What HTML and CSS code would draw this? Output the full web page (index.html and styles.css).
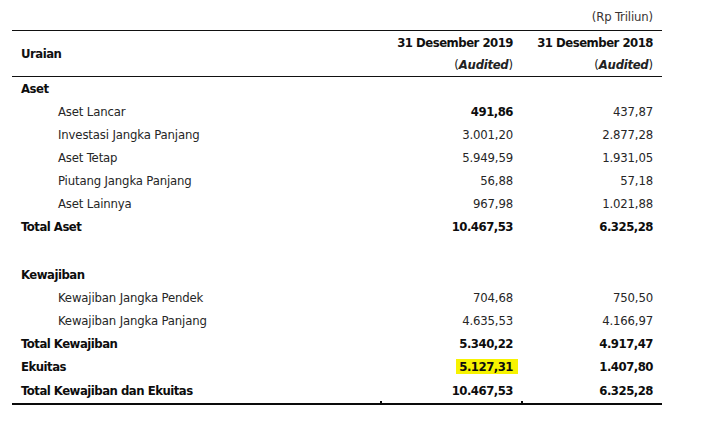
FILE: index.html
```html
<!DOCTYPE html>
<html lang="id">
<head>
<meta charset="utf-8">
<title>Neraca</title>
<link rel="stylesheet" href="styles.css">
</head>
<body>
<div class="sheet">
  <div class="unit">(Rp Triliun)</div>
  <table class="fin">
    <colgroup>
      <col class="c-lbl">
      <col class="c-y1">
      <col class="c-y2">
    </colgroup>
    <thead>
      <tr class="h1">
        <th class="lbl" rowspan="2">Uraian</th>
        <th class="num">31 Desember 2019</th>
        <th class="num">31 Desember 2018</th>
      </tr>
      <tr class="h2">
        <th class="num aud">(<i>Audited</i>)</th>
        <th class="num aud">(<i>Audited</i>)</th>
      </tr>
    </thead>
    <tbody>
      <tr class="b"><td class="lbl">Aset</td><td class="num"></td><td class="num"></td></tr>
      <tr><td class="lbl ind">Aset Lancar</td><td class="num strong">491,86</td><td class="num">437,87</td></tr>
      <tr><td class="lbl ind">Investasi Jangka Panjang</td><td class="num">3.001,20</td><td class="num">2.877,28</td></tr>
      <tr><td class="lbl ind">Aset Tetap</td><td class="num">5.949,59</td><td class="num">1.931,05</td></tr>
      <tr><td class="lbl ind">Piutang Jangka Panjang</td><td class="num">56,88</td><td class="num">57,18</td></tr>
      <tr><td class="lbl ind">Aset Lainnya</td><td class="num">967,98</td><td class="num">1.021,88</td></tr>
      <tr class="b"><td class="lbl">Total Aset</td><td class="num">10.467,53</td><td class="num">6.325,28</td></tr>
      <tr class="gap"><td class="lbl"></td><td class="num"></td><td class="num"></td></tr>
      <tr class="b"><td class="lbl">Kewajiban</td><td class="num"></td><td class="num"></td></tr>
      <tr><td class="lbl ind">Kewajiban Jangka Pendek</td><td class="num">704,68</td><td class="num">750,50</td></tr>
      <tr><td class="lbl ind">Kewajiban Jangka Panjang</td><td class="num">4.635,53</td><td class="num">4.166,97</td></tr>
      <tr class="b"><td class="lbl">Total Kewajiban</td><td class="num">5.340,22</td><td class="num">4.917,47</td></tr>
      <tr class="b tall"><td class="lbl">Ekuitas</td><td class="num"><span class="hl">5.127,31</span></td><td class="num">1.407,80</td></tr>
      <tr class="b tall last"><td class="lbl">Total Kewajiban dan Ekuitas</td><td class="num tick">10.467,53</td><td class="num tick">6.325,28</td></tr>
    </tbody>
  </table>
</div>
</body>
</html>
```
FILE: styles.css
```css
html, body {
  margin: 0;
  padding: 0;
  background: #ffffff;
}
body {
  font-family: "DejaVu Sans Condensed", "DejaVu Sans", sans-serif;
  font-stretch: condensed;
  font-size: 13px;
  letter-spacing: -0.15px;
  color: #262626;
}
.sheet {
  width: 650px;
  margin-left: 12px;
  padding-top: 8px;
}
.unit {
  text-align: right;
  padding-right: 9px;
  height: 22px;
  line-height: 18px;
  color: #3a3433;
}
.fin {
  width: 650px;
  border-collapse: collapse;
  table-layout: fixed;
}
.c-lbl { width: 369px; }
.c-y1 { width: 141px; }
.c-y2 { width: 140px; }
.fin th, .fin td {
  box-sizing: border-box;
  padding: 0;
  height: 23px;
  vertical-align: middle;
  white-space: nowrap;
}
.fin thead tr.h1 th { border-top: 1px solid #111; height: 23px; }
.fin thead tr.h2 th { height: 23px; }
.fin thead tr.h2 th, .fin thead th.lbl { border-bottom: 1px solid #111; }
.fin th {
  font-weight: bold;
  letter-spacing: -0.5px;
  color: #111;
  text-align: left;
}
.fin th.lbl { padding-left: 9px; }
.fin .num {
  text-align: right;
  padding-right: 9px;
}
.fin th.num { text-align: right; }
.fin th.aud { font-weight: normal; color: #222; letter-spacing: 0; }
.fin th.aud i { font-weight: bold; font-style: italic; letter-spacing: -0.3px; }
.fin td.lbl { padding-left: 9px; }
.fin td.ind { padding-left: 46px; }
.fin tr.b td, .fin td.strong {
  font-weight: bold;
  letter-spacing: -0.5px;
  color: #0d0d0d;
}
.fin tr.gap td { height: 25px; }
.fin tr.tall td { height: 24px; }
.fin tr.last td {
  height: 25px;
  border-bottom: 2px solid #0a0a0a;
}
.fin td.tick { position: relative; }
.fin td.tick::before {
  content: "";
  position: absolute;
  left: -1px;
  bottom: -3px;
  width: 2px;
  height: 5px;
  background: #0a0a0a;
}
.hl {
  background: #f7f300;
  padding: 0 5px 0 3px;
  margin-right: -5px;
}
```
